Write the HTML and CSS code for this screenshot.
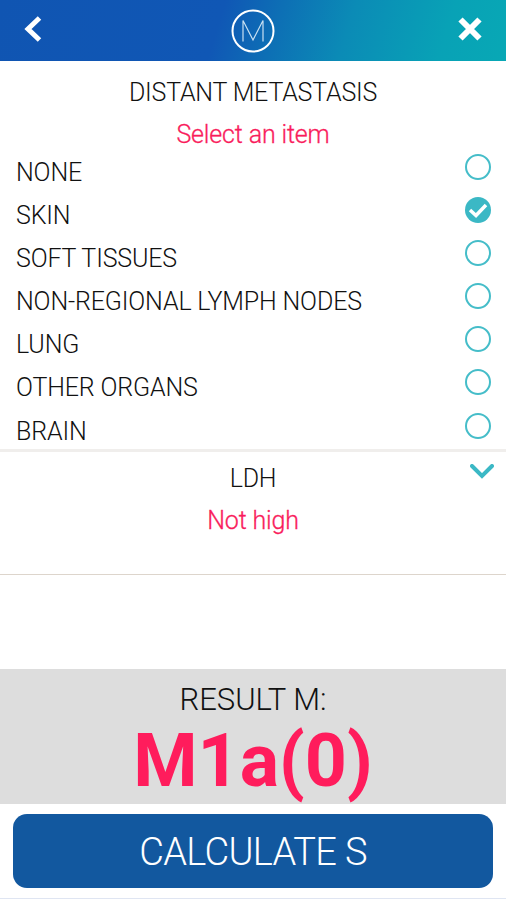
FILE: index.html
```html
<!DOCTYPE html>
<html lang="en">
<head>
<meta charset="utf-8">
<title>Distant metastasis</title>
<link rel="stylesheet" href="styles.css">
</head>
<body>
<header class="bar">
<svg class="back" viewBox="0 0 20 28"><path d="M16.500 3 5 14l11.500 11"/></svg>
<svg class="logo" viewBox="0 0 44 44"><circle cx="22" cy="22" r="20.5"/><path d="M12 32.500V11.500L22 31l10-19.500v21"/></svg>
<svg class="close" viewBox="0 0 26 26"><path d="m3.500 3.500 19 19M22.500 3.500l-19 19"/></svg>
</header>
<section class="question">
<h1>DISTANT METASTASIS</h1>
<p class="hint">Select an item</p>
<ul>
<li><span>NONE</span><i class="radio"></i></li>
<li><span>SKIN</span><svg class="checked" viewBox="0 0 26 26"><circle cx="13" cy="13" r="13"/><path d="m5 13 6 5.500L21 8"/></svg></li>
<li><span>SOFT TISSUES</span><i class="radio"></i></li>
<li><span>NON-REGIONAL LYMPH NODES</span><i class="radio"></i></li>
<li><span>LUNG</span><i class="radio"></i></li>
<li><span>OTHER ORGANS</span><i class="radio"></i></li>
<li><span>BRAIN</span><i class="radio"></i></li>
</ul>
</section>
<section class="ldh">
<h2>LDH</h2>
<p class="hint">Not high</p>
<svg class="chevron" viewBox="0 0 24 16"><path d="m2 2 10 10L22 2"/></svg>
</section>
<section class="result">
<h2>RESULT M:</h2>
<strong>M1a(0)</strong>
</section>
<footer><button>CALCULATE S</button></footer>
</body>
</html>
```
FILE: styles.css
```css
* { box-sizing: border-box; margin: 0; padding: 0; }
body { width: 506px; height: 900px; display: flex; flex-direction: column; overflow: hidden; background: #fff; color: #111; font-family: Roboto, sans-serif; font-weight: 300; }
.bar { height: 61px; flex: none; display: flex; align-items: center; justify-content: space-between; padding: 0 23px; background: linear-gradient(107deg, #1055b2 0%, #1057b5 43%, #0d6fb5 54%, #0b8bb6 68%, #08a2b6 87%, #08a8b5 100%); }
svg { fill: none; stroke: #fff; }
.back { width: 20px; height: 28px; stroke-width: 5; margin-top: -4px; }
.logo { width: 44px; height: 44px; stroke-width: 2; margin-left: 6px; }
.logo path { stroke-width: 1.200; stroke: #c8e0f2; }
.close { width: 26px; height: 26px; stroke-width: 6; margin-top: -4px; }
.question { height: 391px; flex: none; padding-top: 16px; border-bottom: 3px solid #f0eeec; }
h1, h2 { font-size: 25px; line-height: 32px; font-weight: 300; text-align: center; letter-spacing: -0.200px; }
.hint { margin-top: 10px; font-size: 25px; line-height: 32px; text-align: center; color: #f91c5c; font-weight: 300; letter-spacing: -0.150px; -webkit-text-stroke: 0.300px; }
ul { list-style: none; }
li { height: 43.100px; display: flex; justify-content: space-between; padding: 3px 15px 0 16px; font-size: 25px; line-height: 37px; letter-spacing: -0.150px; }
.radio { width: 26px; height: 26px; border: 2px solid #45bdc9; border-radius: 50%; }
.checked { width: 26px; height: 26px; stroke-width: 3.500; }
.checked circle { fill: #3bb8c5; stroke: none; }
.ldh { height: 123px; flex: none; padding-top: 11px; border-bottom: 1px solid #ddd5cc; position: relative; }
.chevron { position: absolute; right: 12px; top: 12px; width: 24px; height: 16px; stroke: #3bb8c5; stroke-width: 4; stroke-linecap: round; }
.result { height: 135px; flex: none; margin-top: 94px; padding-top: 12px; background: #ddd; text-align: center; }
.result h2 { font-size: 31px; line-height: 37px; letter-spacing: 0; }
.result strong { display: block; font-size: 73.500px; line-height: 86px; font-weight: 700; color: #ff1c5c; }
footer { padding: 10px 13px; border-bottom: 1px solid #dfe5f2; height: 95px; }
button { width: 100%; height: 74px; padding-top: 2px; border: 0; border-radius: 14px; background: #12589f; color: #fff; font: 300 38px Roboto, sans-serif; letter-spacing: -0.650px; }
```
